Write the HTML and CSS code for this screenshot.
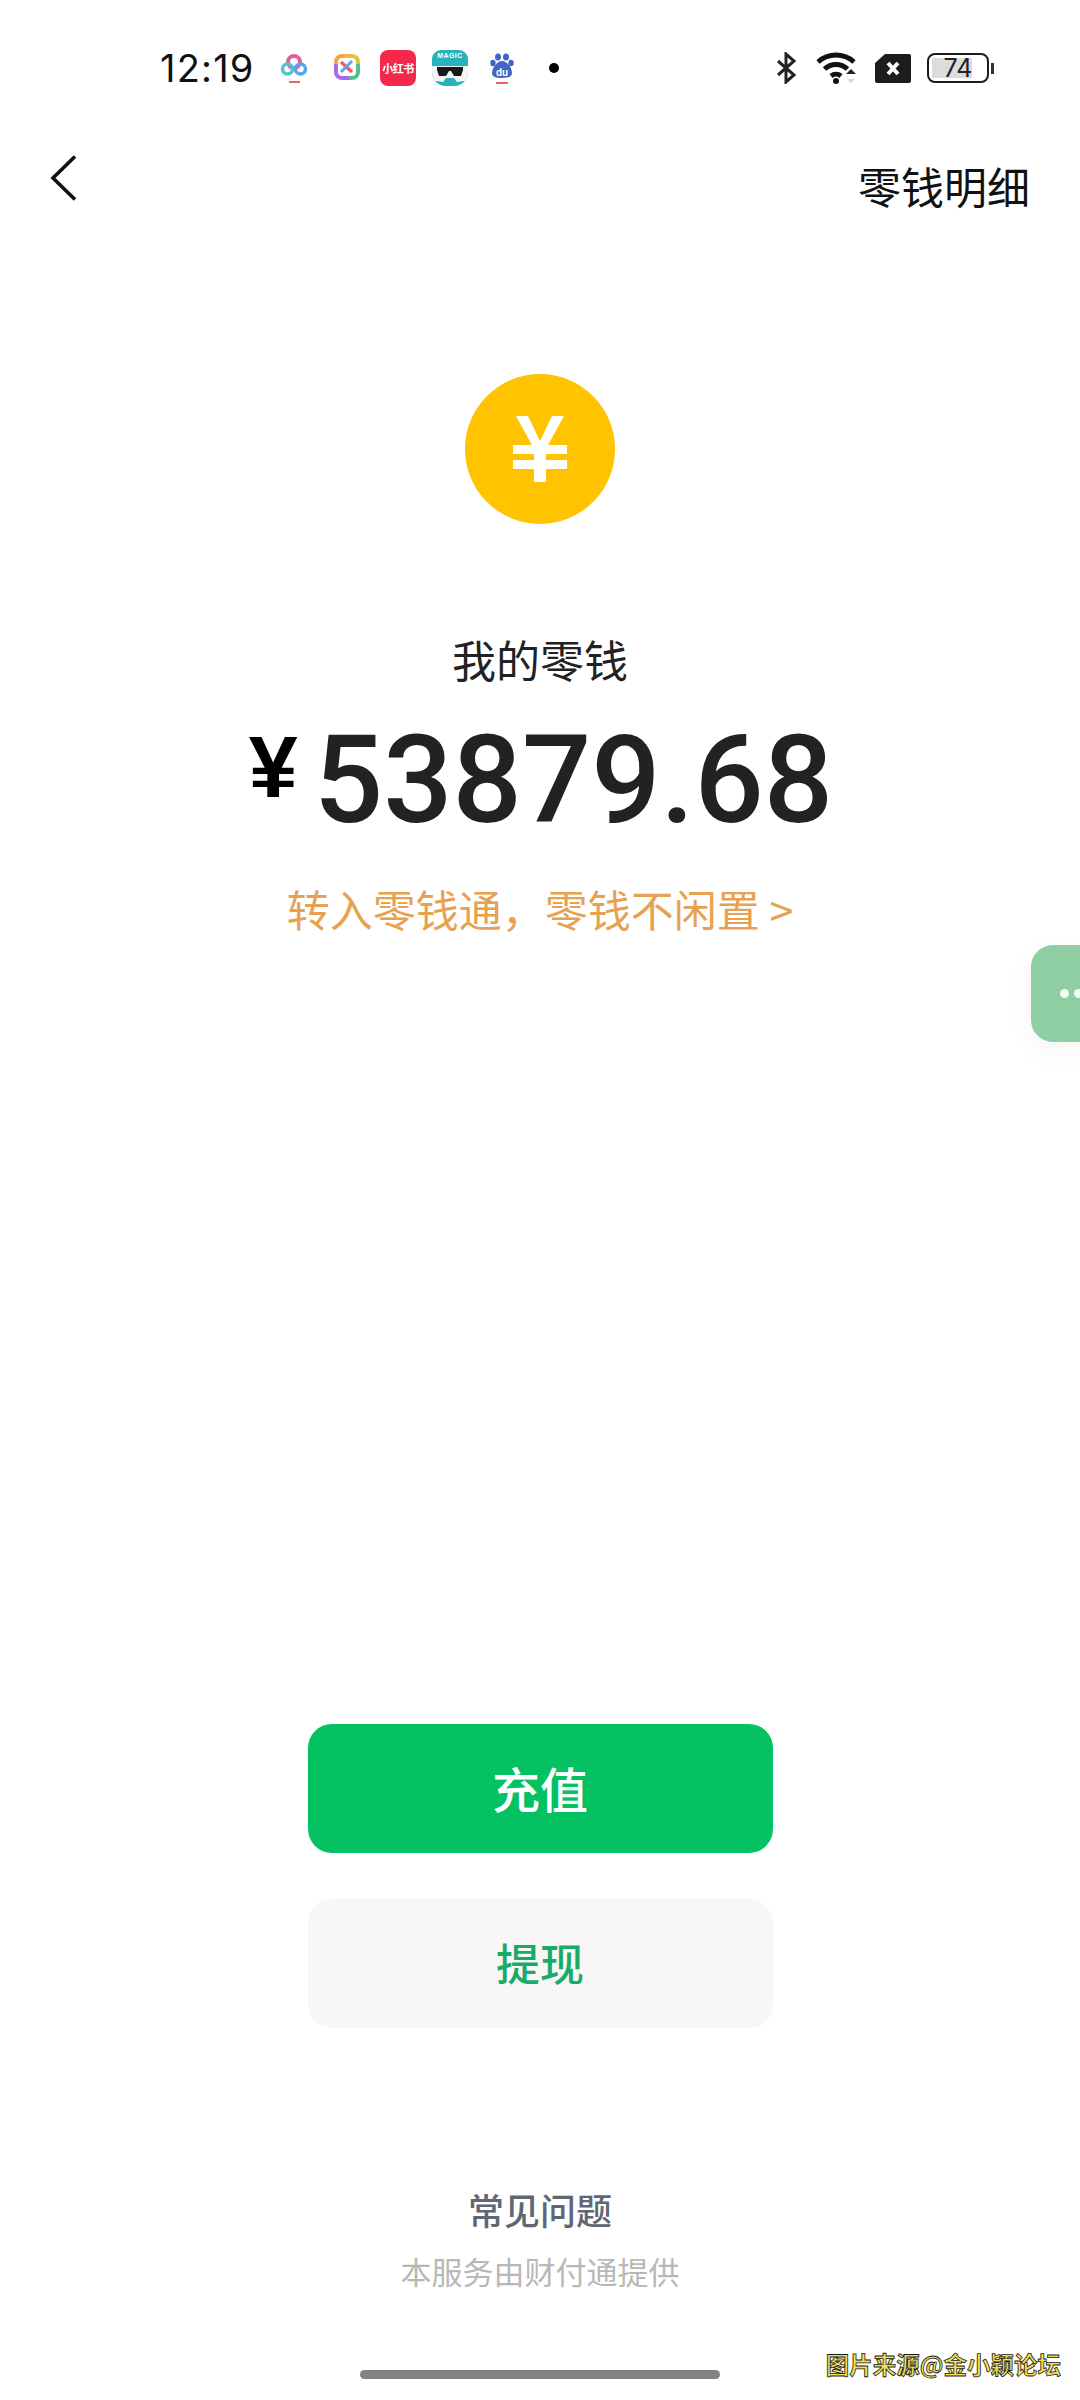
FILE: index.html
```html
<!DOCTYPE html>
<html lang="zh-CN">
<head>
<meta charset="utf-8">
<title>我的零钱</title>
<link rel="stylesheet" href="styles.css">
</head>
<body>
<div class="page">
  <header class="status">
    <div class="status-left">
      <span class="time">12:19</span>
      <svg class="ic ic-1" viewBox="0 0 28 32"><circle cx="14" cy="9" r="6" fill="none" stroke="#e0609a" stroke-width="4"/><circle cx="7.500" cy="16" r="5" fill="none" stroke="#4ec5cf" stroke-width="3.500"/><circle cx="20.500" cy="16" r="5" fill="none" stroke="#5aa6e6" stroke-width="3.500"/><rect x="9" y="28" width="11" height="2" fill="#e8665f"/></svg>
      <svg class="ic ic-2" viewBox="0 0 26 26"><path d="M2 10V8a6 6 0 0 1 6-6h3" fill="none" stroke="#f0a63c" stroke-width="4"/><path d="M11 2h7a6 6 0 0 1 6 6v2" fill="none" stroke="#e8c13c" stroke-width="4"/><path d="M24 10v8a6 6 0 0 1-6 6h-3" fill="none" stroke="#4fc48a" stroke-width="4"/><path d="M15 24H8a6 6 0 0 1-6-6v-8" fill="none" stroke="#a86be8" stroke-width="4"/><path d="M7 8l11 10" stroke="#ef5a6f" stroke-width="3.500"/><path d="M18 7L7 18" stroke="#5aa6e6" stroke-width="3"/></svg>
      <span class="xhs">小红书</span>
      <span class="magic"><span class="magic-word">MAGIC</span><svg class="magic-face" viewBox="0 0 36 20"><path d="M0 20V4h36v16l-5-1-6 1-3-4h-8l-3 4-6-1z" fill="#f4f6f6"/><path d="M5 5h26v3l-2 6h-7l-3-5h-2l-3 5H7L5 8z" fill="#16191b"/></svg></span>
      <svg class="ic ic-3" viewBox="0 0 24 32"><g fill="#3f66c6"><ellipse cx="8" cy="4" rx="3" ry="3.600"/><ellipse cx="16" cy="4" rx="3" ry="3.600"/><ellipse cx="3" cy="10" rx="2.700" ry="3.200"/><ellipse cx="21" cy="10" rx="2.700" ry="3.200"/><path d="M12 8c5 0 10 7 10 12 0 4-4 5-10 5S2 24 2 20c0-5 5-12 10-12z"/></g><text class="du" x="12" y="23" text-anchor="middle">du</text><rect x="6" y="29" width="12" height="2" fill="#e8665f"/></svg>
      <span class="dot"></span>
    </div>
    <div class="status-right">
      <svg class="bt" viewBox="0 0 20 32"><path d="M2 9l16 14-8 7V2l8 7L2 23" fill="none" stroke="#222" stroke-width="3"/></svg>
      <svg class="wifi" viewBox="0 0 44 34"><path d="M2 11a27 27 0 0 1 36 0" fill="none" stroke="#111" stroke-width="5"/><path d="M8.500 18a17 17 0 0 1 23 0" fill="none" stroke="#111" stroke-width="5"/><path d="M15 25a8 8 0 0 1 10 0" fill="none" stroke="#111" stroke-width="5"/><circle cx="20" cy="30" r="3" fill="#111"/><path d="M30 23l5-5 5 5z" fill="#222"/><path d="M35 32l-4-4h8z" fill="#d8d8d8"/></svg>
      <svg class="sim" viewBox="0 0 36 29"><path d="M10 0h24a2 2 0 0 1 2 2v25a2 2 0 0 1-2 2H2a2 2 0 0 1-2-2V9z" fill="#1c1c1c"/><path d="M13 9l10 11M23 9L13 20" stroke="#fff" stroke-width="4"/></svg>
      <div class="battery"><div class="battery-body"><span class="battery-fill"></span><span class="battery-num">74</span></div><span class="battery-nub"></span></div>
    </div>
  </header>

  <nav class="nav">
    <svg class="back" viewBox="0 0 27 46"><path d="M25 1.500L3 23l22 21.500" fill="none" stroke="#111" stroke-width="3.600"/></svg>
    <span class="nav-title">零钱明细</span>
  </nav>

  <main class="hero">
    <div class="coin">
      <svg class="coin-mark" viewBox="0 0 54 66"><path d="M3 0h12l12 25L39 0h12L35 29h19v9H33v6h21v9H33v13H21V53H0v-9h21v-6H0v-9h19z" fill="#fff"/></svg>
    </div>
    <h1 class="label">我的零钱</h1>
    <div class="amount"><span class="yen">¥</span><span class="value">53879.68</span></div>
    <p class="promo">转入零钱通，零钱不闲置 &gt;</p>
  </main>

  <section class="actions">
    <button class="btn btn-primary"><span class="btn-text">充值</span></button>
    <button class="btn btn-secondary"><span class="btn-text">提现</span></button>
  </section>

  <footer class="foot">
    <span class="faq">常见问题</span>
    <span class="provider">本服务由财付通提供</span>
  </footer>

  <div class="home"></div>
  <div class="float-btn"><span class="fdot"></span><span class="fdot"></span></div>
  <div class="mark">图片来源@金小颖论坛</div>
</div>
</body>
</html>
```

FILE: styles.css
```css
* { box-sizing: border-box; }
html, body { margin: 0; padding: 0; background: #fff; }
body { font-family: "Noto Sans CJK SC", "Noto Sans", sans-serif; }
.page { position: relative; width: 1080px; height: 2400px; overflow: hidden; background: #fff; display: flex; flex-direction: column; align-items: center; }

.status { width: 100%; height: 136px; flex: none; display: flex; justify-content: space-between; align-items: center; padding: 0 86px 0 160px; }
.status-left { display: flex; align-items: center; }
.status-right { display: flex; align-items: center; }
.time { font-family: Inter, Roboto, sans-serif; font-size: 38px; letter-spacing: 1.200px; color: #111; width: 120px; line-height: 1; }
.ic { display: block; flex: none; }
.ic-1 { width: 28px; height: 32px; margin-top: 2px; }
.ic-2 { width: 26px; height: 26px; margin-left: 26px; margin-top: -2px; }
.xhs { width: 36px; height: 36px; margin-left: 20px; border-radius: 8px; background: #f5274a; color: #fff; font-size: 11px; font-weight: 700; line-height: 36px; text-align: center; white-space: nowrap; letter-spacing: -.5px; }
.magic { width: 36px; height: 36px; margin-left: 16px; border-radius: 9px 9px 14px 14px; background: #27b3bd; display: flex; flex-direction: column; align-items: center; overflow: hidden; }
.magic-word { font: 700 7px/12px "Liberation Sans", sans-serif; color: #fff; letter-spacing: .4px; }
.magic-face { width: 36px; height: 20px; display: block; }
.ic-3 { width: 24px; height: 32px; margin-left: 22px; margin-top: 2px; }
.du { font: 700 10px "Liberation Sans", sans-serif; fill: #fff; }
.dot { width: 10px; height: 10px; border-radius: 50%; background: #000; margin-left: 35px; }

.bt { width: 20px; height: 32px; }
.wifi { width: 44px; height: 34px; margin-left: 20px; }
.sim { width: 36px; height: 29px; margin-left: 15px; }
.battery { display: flex; align-items: center; margin-left: 16px; }
.battery-body { position: relative; width: 62px; height: 30px; border: 2px solid #1c1c1c; border-radius: 8px; display: flex; align-items: center; justify-content: center; overflow: hidden; }
.battery-fill { position: absolute; left: 3px; top: 3px; bottom: 3px; width: 40px; background: #dcdcdc; }
.battery-num { position: relative; font-family: Inter, Roboto, sans-serif; font-size: 25px; color: #222; line-height: 1; }
.battery-nub { width: 3px; height: 11px; background: #333; margin-left: 2px; }

.nav { width: 100%; height: 84px; flex: none; display: flex; justify-content: space-between; align-items: center; padding: 0 50px; }
.back { width: 27px; height: 46px; display: block; }
.nav-title { font-size: 43px; line-height: 60px; color: #111; margin-top: 14px; }

.hero { width: 100%; flex: none; display: flex; flex-direction: column; align-items: center; padding-top: 154px; }
.coin { width: 150px; height: 150px; border-radius: 50%; background: #ffc300; display: flex; align-items: center; justify-content: center; }
.coin-mark { width: 54px; height: 66px; display: block; }
.label { margin: 105px 0 0; font-size: 44px; font-weight: 400; line-height: 60px; color: #222; }
.amount { display: flex; align-items: flex-start; height: 130px; margin-top: 25px; margin-left: 2px; }
.yen { font-family: "Liberation Sans", sans-serif; font-weight: 700; font-size: 88px; line-height: 106px; color: #000; width: 65px; }
.value { font-family: Roboto, sans-serif; font-weight: 500; font-size: 122px; line-height: 134px; color: #222; letter-spacing: 0; }
.promo { margin: 34px 0 0; font-size: 43px; line-height: 60px; color: #e6a250; }

.actions { display: flex; flex-direction: column; gap: 46px; margin-top: 786px; flex: none; }
.btn { width: 465px; height: 129px; border: 0; border-radius: 24px; font-family: inherit; display: block; padding: 0 0 2px; }
.btn-primary { background: #04c162; color: #fff; font-size: 48px; font-weight: 500; }
.btn-secondary { background: #f9f6f8; color: #17ad68; font-size: 44px; font-weight: 500; }
.btn-text { display: block; line-height: 1.2; }

.foot { display: flex; flex-direction: column; align-items: center; margin-top: 156px; flex: none; }
.faq { font-size: 36px; line-height: 50px; font-weight: 500; color: #5f6676; }
.provider { font-size: 31px; line-height: 44px; color: #b8b8b8; margin-top: 15px; }

.home { position: absolute; left: 360px; top: 2370px; width: 360px; height: 9px; border-radius: 5px; background: #828282; }
.float-btn { position: absolute; right: 0; top: 945px; width: 49px; height: 97px; border-radius: 22px 0 0 22px; background: #8fcda3; box-shadow: 0 8px 24px rgba(120, 100, 120, .07); display: flex; align-items: center; gap: 5px; padding-left: 29px; }
.fdot { width: 9px; height: 9px; flex: none; border-radius: 50%; background: #f3fbf5; }
.mark { position: absolute; right: 19px; top: 2349px; font-size: 23.500px; line-height: 30px; font-weight: 700; color: #f3df55; -webkit-text-stroke: .8px #1a1a1a; white-space: nowrap; }
```
